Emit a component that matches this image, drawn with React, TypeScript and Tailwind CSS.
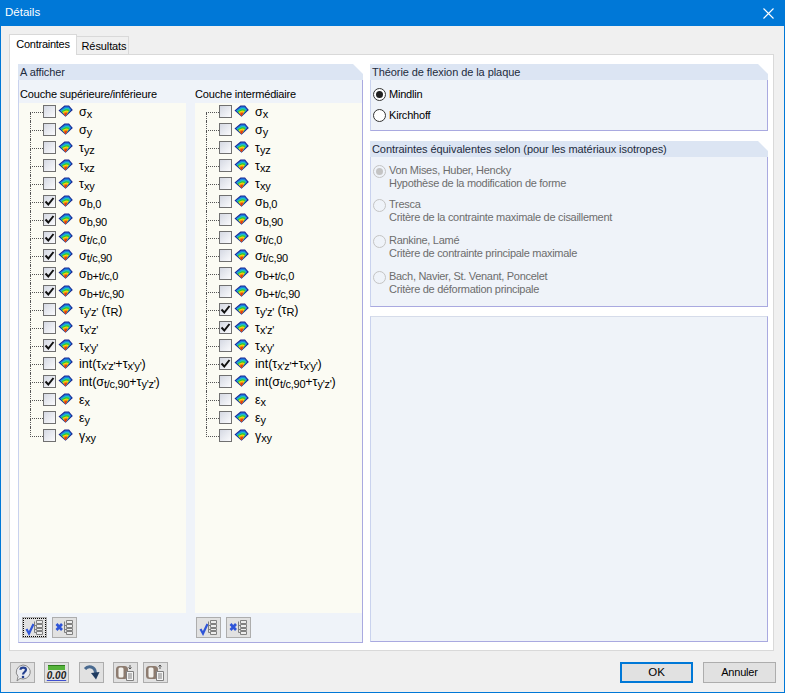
import React from "react";

type Part = [string, string?];
type Item = { parts: Part[]; left?: boolean; right?: boolean };

const items: Item[] = [
  { parts: [["σ", "x"]] },
  { parts: [["σ", "y"]] },
  { parts: [["τ", "yz"]] },
  { parts: [["τ", "xz"]] },
  { parts: [["τ", "xy"]] },
  { parts: [["σ", "b,0"]], left: true },
  { parts: [["σ", "b,90"]], left: true },
  { parts: [["σ", "t/c,0"]], left: true },
  { parts: [["σ", "t/c,90"]], left: true },
  { parts: [["σ", "b+t/c,0"]], left: true },
  { parts: [["σ", "b+t/c,90"]], left: true },
  { parts: [["τ", "y'z'"], [" (τ", "R"], [")"]], right: true },
  { parts: [["τ", "x'z'"]], right: true },
  { parts: [["τ", "x'y'"]], left: true },
  { parts: [["int(τ", "x'z'"], ["+τ", "x'y'"], [")"]], right: true },
  { parts: [["int(σ", "t/c,90"], ["+τ", "y'z'"], [")"]], left: true },
  { parts: [["ε", "x"]] },
  { parts: [["ε", "y"]] },
  { parts: [["γ", "xy"]] },
];

function RainbowIcon() {
  return (
    <svg width="15" height="12" viewBox="0 0 15 12" className="shrink-0">
      <path d="M0.5 5.5 L6.5 0.5 L11 0.5 L14.8 5 L7.5 11.8 Z" fill="#1a2590" />
      <path d="M1.8 5.5 L7 1.5 L10.6 1.5 L13.4 4.8 L7.5 10.8 Z" fill="#1b7fe0" />
      <path d="M2.8 5.8 L7.5 3 L10.5 3 L12.4 5 L7.5 11 Z" fill="#1fc4c0" />
      <path d="M3.6 6.2 L8 4.2 L10.5 4.4 L11.5 5.4 L7.5 11 Z" fill="#35c42e" />
      <path d="M4.5 7 L8.2 5.4 L10.8 6 L7.5 11 Z" fill="#f2e30f" />
      <path d="M5.2 7.8 L8.5 6.6 L10 7 L7.5 11 Z" fill="#f58a12" />
      <path d="M6 8.8 L8.5 8 L9.2 8.2 L7.5 11.3 Z" fill="#e32a18" />
    </svg>
  );
}

function CheckBox({ checked }: { checked?: boolean }) {
  return (
    <div className="w-[13px] h-[13px] shrink-0 border border-[#707070] bg-gradient-to-br from-[#d5d9e3] to-[#fbfbfd] flex items-center justify-center">
      {checked && (
        <svg width="11" height="11" viewBox="0 0 11 11">
          <path d="M1.5 5.5 L4.3 8.5 L9.5 2" fill="none" stroke="#111" strokeWidth="2" />
        </svg>
      )}
    </div>
  );
}

function Label({ parts }: { parts: Part[] }) {
  return (
    <span className="text-[12.5px] leading-[14px] text-black whitespace-pre">
      {parts.map(([base, sub], i) => (
        <React.Fragment key={i}>
          {base}
          {sub && <span className="text-[11px] tracking-[-0.3px] align-[-2px]">{sub}</span>}
        </React.Fragment>
      ))}
    </span>
  );
}

function Tree({ side }: { side: "left" | "right" }) {
  return (
    <div className="flex flex-col pl-[11px]">
      {items.map((it, i) => (
        <div key={i} className="flex items-start h-[18px]">
          <div className="w-[13px] shrink-0 flex flex-col">
            <div className={`h-[10px] border-b border-dotted border-[#555] ${i === 0 ? "" : "border-l"}`} />
            {i !== items.length - 1 && <div className="h-[8px] border-l border-dotted border-[#555]" />}
          </div>
          <div className="flex items-center gap-[2px] h-[18px] -mt-px">
            <CheckBox checked={side === "left" ? it.left : it.right} />
            <RainbowIcon />
            <div className="ml-[4px]">
              <Label parts={it.parts} />
            </div>
          </div>
        </div>
      ))}
    </div>
  );
}

function ListStack() {
  return (
    <>
      <path d="M1.5 2.5v11M1.5 6.5h2M1.5 10.5h2M1.5 13.5h2" fill="none" stroke="#808080" />
      <path d="M3.5 1.5h6v3h-6zM3.5 5.5h6v3h-6zM3.5 9.5h6v2h-6zM3.5 12.5h6v3h-6z" fill="#ececec" stroke="#808080" strokeWidth="1" />
    </>
  );
}

function CheckAllIcon() {
  return (
    <svg width="19" height="17" viewBox="0 0 19 17">
      <path d="M1.5 10 L4 14.5 L8.5 5" fill="none" stroke="#2f55d8" strokeWidth="2.2" />
      <g transform="translate(8 0)">
        <ListStack />
      </g>
    </svg>
  );
}

function UncheckAllIcon() {
  return (
    <svg width="19" height="17" viewBox="0 0 19 17">
      <path d="M1.5 5 L7 11 M7 5 L1.5 11" fill="none" stroke="#2f55d8" strokeWidth="2.6" />
      <g transform="translate(8 0)">
        <ListStack />
      </g>
    </svg>
  );
}

function IconButton({ children, focused }: { children: React.ReactNode; focused?: boolean }) {
  return (
    <div className="w-[25px] h-[21px] border border-[#adadad] bg-[#e1e1e1] flex items-center justify-center shrink-0">
      <div
        className={`w-[21px] h-[17px] flex items-center justify-center ${
          focused ? "outline-1 outline-dotted outline-black" : ""
        }`}
      >
        {children}
      </div>
    </div>
  );
}

function Column({ title, side, focused }: { title: string; side: "left" | "right"; focused?: boolean }) {
  return (
    <div className="w-[167px] flex flex-col">
      <div className={`h-[23px] pt-[7px] text-[11px] leading-[14px] tracking-[-0.18px] text-black ${side === "left" ? "pl-px" : ""}`}>{title}</div>
      <div className="h-[510px] bg-[#fbfbf3]">
        <Tree side={side} />
      </div>
      <div className={`flex gap-[5px] pt-[4px] pb-[4px] ${side === "left" ? "pl-[3px]" : "pl-px"}`}>
        <IconButton focused={focused}>
          <CheckAllIcon />
        </IconButton>
        <IconButton>
          <UncheckAllIcon />
        </IconButton>
      </div>
    </div>
  );
}

function GroupHeader({ title }: { title: string }) {
  return (
    <div className="h-[16px] shrink-0 bg-[#dce5f3] pl-[2px] pt-px text-[11px] leading-[15px] tracking-[-0.07px] text-[#1d2b3d] [clip-path:polygon(0_0,calc(100%-10px)_0,100%_10px,100%_100%,0_100%)]">
      {title}
    </div>
  );
}

function Radio({ checked, disabled }: { checked?: boolean; disabled?: boolean }) {
  return (
    <div
      className={`w-[13px] h-[13px] rounded-full border shrink-0 flex items-center justify-center ${
        disabled ? "border-[#c4c4c4] bg-[#eff3f9]" : "border-[#333] bg-white"
      }`}
    >
      {checked && <div className={`w-[7px] h-[7px] rounded-full ${disabled ? "bg-[#c4c4c4]" : "bg-[#222]"}`} />}
    </div>
  );
}

function EqRow({ a, b, checked, first }: { a: string; b: string; checked?: boolean; first?: boolean }) {
  return (
    <div className={`flex gap-[3px] text-[11px] leading-[13px] tracking-[-0.29px] text-[#6d6d6d] ${first ? "h-[34px]" : "h-[36px]"}`}>
      <div className="pt-px">
        <Radio disabled checked={checked} />
      </div>
      <div className="flex flex-col">
        <span>{a}</span>
        <span>{b}</span>
      </div>
    </div>
  );
}

function FooterHelp() {
  return (
    <svg width="20" height="18" viewBox="0 0 20 18">
      <path d="M10 1 a7.5 7 0 1 1 -3 13.5 L4 17 L5 12.5 A7.5 7 0 0 1 10 1 Z" fill="#e9ebf0" stroke="#8a8a8a" />
      <path d="M7.5 5.8 C7.5 2.8 13 2.8 13 5.8 C13 8 10.2 8 10 10.5" fill="none" stroke="#24408f" strokeWidth="2.2" />
      <circle cx="10" cy="13" r="1.3" fill="#24408f" />
    </svg>
  );
}

function FooterRuler() {
  return (
    <div className="w-[21px] flex flex-col items-center">
      <div className="w-[17px] h-[5px] bg-[#55b33a] border-t border-[#2e7d1e]" />
      <span className="text-[10px] leading-[11px] italic font-bold text-[#222] underline decoration-[#3f4fd0]">0.00</span>
    </div>
  );
}

function FooterArrow() {
  return (
    <svg width="20" height="18" viewBox="0 0 20 18">
      <path d="M3 5 C6 1.5 13 2 13.5 9" fill="none" stroke="#4a6a90" strokeWidth="3" />
      <path d="M9 9 L17.5 8 L14 15.5 Z" fill="#1f3a5f" />
    </svg>
  );
}

function FooterCopy({ up }: { up?: boolean }) {
  return (
    <svg width="21" height="18" viewBox="0 0 21 18">
      <rect x="1" y="2" width="12" height="13" rx="3.5" fill="#8d7c70" />
      <rect x="3.5" y="3.5" width="5" height="10" rx="1.5" fill="#f4f2ee" />
      <path d="M11.5 7.5h7v9h-7z" fill="#f4f4f4" stroke="#808080" />
      <path d="M13 10h4M13 12h4M13 14h4" stroke="#808080" />
      <path d={up ? "M15 1v4M13.5 2.5L15 1l1.5 1.5" : "M15 1v4M13.5 3.5L15 5l1.5-1.5"} fill="none" stroke="#555" />
    </svg>
  );
}

const sans = "font-['Liberation_Sans',Arial,sans-serif]";

export default function App() {
  return (
    <div className={`w-[785px] h-[693px] border border-t-0 border-[#0078d7] bg-[#f0f0f0] flex flex-col overflow-hidden ${sans}`}>
      <div className="h-[26px] -mx-px bg-[#0078d7] flex items-center justify-between pl-[5px] pr-[11px] text-white text-[11.5px] shrink-0">
        <span>Détails</span>
        <svg width="11" height="11" viewBox="0 0 11 11">
          <path d="M0.5 0.5 L10.5 10.5 M10.5 0.5 L0.5 10.5" stroke="#fff" strokeWidth="1.1" />
        </svg>
      </div>

      <div className="flex items-end pl-[8px] h-[28px] shrink-0">
        <div className="relative z-10 -mb-px w-[68px] h-[21px] bg-white border border-b-0 border-[#d9d9d9] text-[11px] tracking-[-0.27px] leading-[18px] text-center text-black">
          Contraintes
        </div>
        <div className="w-[52px] h-[18px] pl-[3px] bg-[#f0f0f0] border border-l-0 border-b-0 border-[#d9d9d9] text-[11px] tracking-[-0.1px] leading-[18px] text-center text-black">
          Résultats
        </div>
      </div>

      <div className="ml-[8px] w-[765px] h-[597px] bg-white border border-[#d9d9d9] pl-[8px] pt-[9px] pb-[8px] flex shrink-0">
        <div className="w-[345px] flex flex-col">
          <GroupHeader title="A afficher" />
          <div className="flex-1 bg-[#eff3f9] flex gap-[9px] border-l border-[#c9d2ee] border-r border-b border-r-[#a9a9e0] border-b-[#a9a9e0]">
            <Column title="Couche supérieure/inférieure" side="left" focused />
            <Column title="Couche intermédiaire" side="right" />
          </div>
        </div>

        <div className="w-[398px] flex flex-col gap-[10px] ml-[7px]">
          <div className="h-[67px] flex flex-col">
            <GroupHeader title="Théorie de flexion de la plaque" />
            <div className="flex-1 bg-[#eff3f9] pl-[2px] pt-[8px] flex flex-col gap-[8px] text-[11px] leading-[13px] tracking-[-0.2px] text-black border-l border-[#c9d2ee] border-r border-b border-r-[#a9a9e0] border-b-[#a9a9e0]">
              <div className="flex gap-[3px] items-center">
                <Radio checked /> <span>Mindlin</span>
              </div>
              <div className="flex gap-[3px] items-center">
                <Radio /> <span>Kirchhoff</span>
              </div>
            </div>
          </div>

          <div className="h-[165px] flex flex-col">
            <GroupHeader title="Contraintes équivalentes selon (pour les matériaux isotropes)" />
            <div className="flex-1 bg-[#eff3f9] pl-[2px] pt-[7px] flex flex-col border-l border-[#c9d2ee] border-r border-b border-r-[#a9a9e0] border-b-[#a9a9e0]">
              <EqRow first checked a="Von Mises, Huber, Hencky" b="Hypothèse de la modification de forme" />
              <EqRow a="Tresca" b="Critère de la contrainte maximale de cisaillement" />
              <EqRow a="Rankine, Lamé" b="Critère de contrainte principale maximale" />
              <EqRow a="Bach, Navier, St. Venant, Poncelet" b="Critère de déformation principale" />
            </div>
          </div>

          <div className="flex-1 bg-[#eff3f9] border border-t-[#d6dcea] border-l-[#c9d2ee] border-b-[#a9a9e0] border-r-[#a9a9e0]" />
        </div>
      </div>

      <div className="flex-1 flex items-start pt-[11px] pl-[9px] pr-[8px]">
        <div className="flex">
          <IconButton><FooterHelp /></IconButton>
          <div className="ml-[9px]"><IconButton><FooterRuler /></IconButton></div>
          <div className="ml-[10px]"><IconButton><FooterArrow /></IconButton></div>
          <div className="ml-[9px]"><IconButton><FooterCopy /></IconButton></div>
          <div className="ml-[5px]"><IconButton><FooterCopy up /></IconButton></div>
        </div>
        <div className="ml-auto flex gap-[10px]">
          <div className="w-[73px] h-[21px] border-2 border-[#0078d7] bg-[#e1e1e1] text-[11.5px] leading-[17px] text-center text-black">OK</div>
          <div className="w-[73px] h-[21px] border border-[#adadad] bg-[#e1e1e1] text-[11px] leading-[19px] tracking-[-0.2px] text-center text-black">Annuler</div>
        </div>
      </div>
    </div>
  );
}
